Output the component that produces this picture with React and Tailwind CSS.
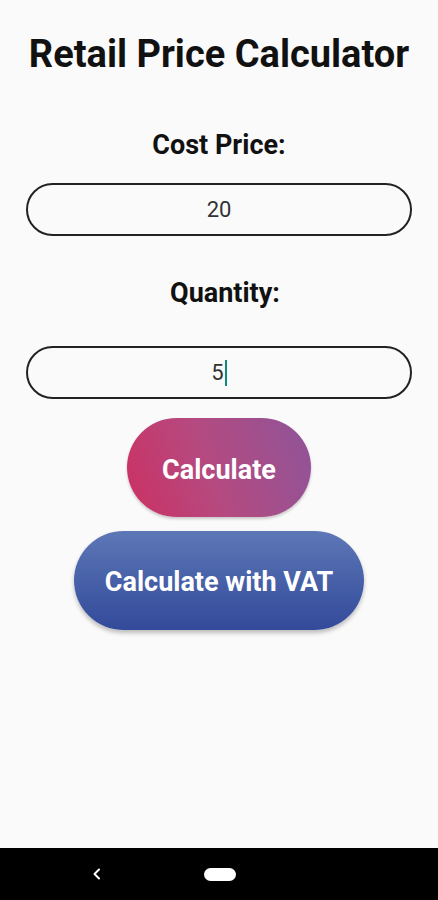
import { useState } from 'react';

const RetailCalculator = () => {
  const [cost, setCost] = useState('20');
  const [qty, setQty] = useState('5');

  return (
    <div className="flex flex-col h-[900px] w-full bg-[#fafafa] font-['Roboto',sans-serif]">
      <div className="flex flex-col items-center flex-1">
        <h1 className="mt-[32px] h-[44px] leading-[44px] text-[38px] font-bold text-[#111]">
          Retail Price Calculator
        </h1>

        <p className="mt-[52px] h-[34px] leading-[34px] text-[27px] font-bold text-[#111]">Cost Price:</p>
        <input
          value={cost}
          onChange={(e) => setCost(e.target.value)}
          className="mt-[21px] w-[386px] h-[53px] rounded-full border-2 border-[#222] bg-transparent text-center text-[22px] text-[#333] outline-none"
        />

        <p className="mt-[40px] h-[34px] leading-[34px] text-[27px] font-bold text-[#111] pl-[12px]">Quantity:</p>
        <div className="relative mt-[36px] w-[386px] h-[53px] rounded-full border-2 border-[#222] flex items-center justify-center">
          <span className="text-[22px] text-[#333]">{qty}</span>
          <span className="w-[2px] h-[26px] bg-[#0f8a7a] ml-[1px]" />
          <input
            value={qty}
            onChange={(e) => setQty(e.target.value)}
            className="absolute inset-0 opacity-0"
          />
        </div>

        <button className="mt-[19px] w-[184px] h-[99px] pt-[5px] rounded-full bg-[linear-gradient(70deg,#cc3062,#b54a80_45%,#8e5499)] text-white text-[27px] font-bold shadow-[0_2px_3px_rgba(0,0,0,0.2)]">
          Calculate
        </button>

        <button className="mt-[14px] w-[290px] h-[99px] pt-[4px] rounded-full bg-gradient-to-b from-[#5d77b6] to-[#334a9a] text-white text-[27px] font-bold shadow-[0_3px_4px_rgba(0,0,0,0.25)]">
          Calculate with VAT
        </button>
      </div>

      <div className="h-[52px] bg-black flex items-center justify-center relative">
        <svg className="absolute left-[92px] top-[20px]" width="10" height="12" viewBox="0 0 10 12">
          <path d="M7 1.5 L2.5 6 L7 10.5" stroke="#fff" strokeWidth="2" fill="none" strokeLinecap="round" strokeLinejoin="round" />
        </svg>
        <div className="w-[32px] h-[13px] rounded-full bg-white ml-[2px]" />
      </div>
    </div>
  );
};

export default function App() {
  return <RetailCalculator />;
}
